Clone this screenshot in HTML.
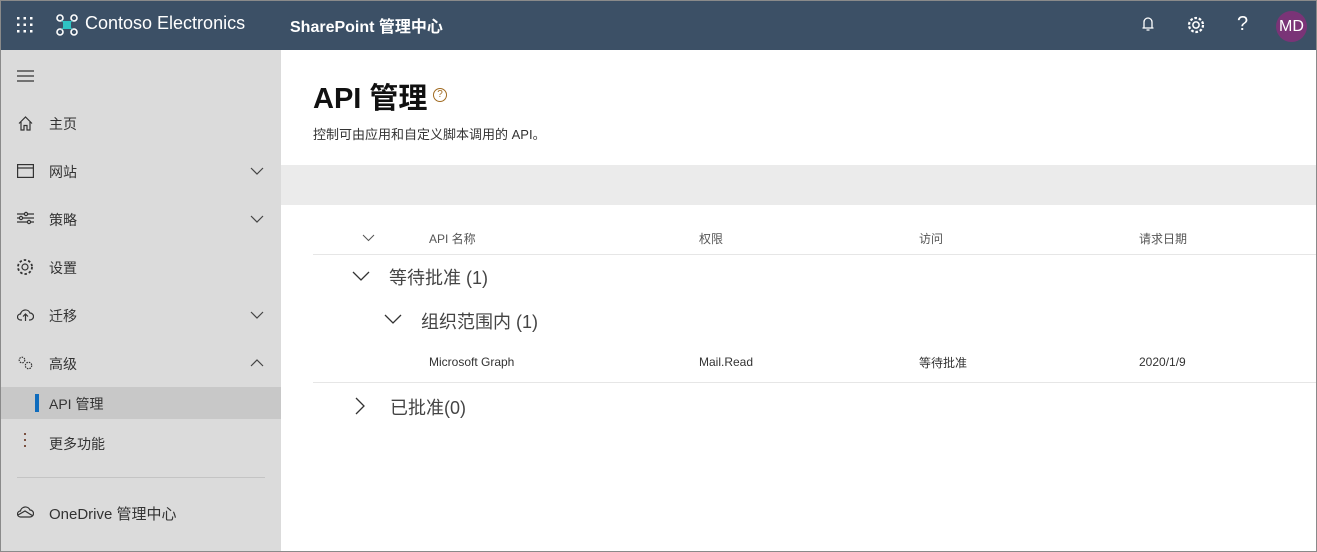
<!DOCTYPE html>
<html><head><meta charset="utf-8"><style>
*{margin:0;padding:0;box-sizing:border-box}
body{width:1317px;height:552px;overflow:hidden;font-family:"Liberation Sans","Noto Sans CJK SC",sans-serif;background:#fff;position:relative}
.frame{position:absolute;inset:0;border:1px solid #8a8a8a;pointer-events:none;z-index:10}
.top{position:absolute;left:0;top:0;width:1317px;height:50px;background:#3c5066;color:#fff}
.side{position:absolute;left:0;top:50px;width:281px;height:502px;background:#dbdbdb}
.abs{position:absolute}
.nav{position:absolute;left:49px;font-size:14px;color:#333}
.chev{position:absolute;left:250px}
.hdr{position:absolute;top:230px;font-size:12px;color:#555}
.cell{position:absolute;top:355px;font-size:12px;color:#333}
</style></head><body>
<div class="top">
 <svg class="abs" style="left:17px;top:17px" width="16" height="16"><g fill="#fff"><rect x="0" y="0" width="2.5" height="2.5"/><rect x="6.5" y="0" width="2.5" height="2.5"/><rect x="13" y="0" width="2.5" height="2.5"/><rect x="0" y="6.5" width="2.5" height="2.5"/><rect x="6.5" y="6.5" width="2.5" height="2.5"/><rect x="13" y="6.5" width="2.5" height="2.5"/><rect x="0" y="13" width="2.5" height="2.5"/><rect x="6.5" y="13" width="2.5" height="2.5"/><rect x="13" y="13" width="2.5" height="2.5"/></g></svg>
 <svg class="abs" style="left:56px;top:14px" width="22" height="22" viewBox="0 0 22 22"><g fill="none" stroke="#fff" stroke-width="1.6"><circle cx="4" cy="4" r="3"/><circle cx="18" cy="4" r="3"/><circle cx="4" cy="18" r="3"/><circle cx="18" cy="18" r="3"/></g><path d="M5 6 L11 9 L17 6 L13 11 L17 16 L11 13 L5 16 L9 11Z" fill="#2ec4c4"/><rect x="7" y="7" width="8" height="8" fill="#2ec4c4"/></svg>
 <div class="abs" style="left:85px;top:13px;font-size:18px">Contoso Electronics</div>
 <div class="abs" style="left:290px;top:13px;font-size:16px;font-weight:bold">SharePoint 管理中心</div>
 <svg class="abs" style="left:1141px;top:16px" width="14" height="16" viewBox="0 0 14 16"><path d="M3 12 V6 a4 4 0 0 1 8 0 V12 H1.5 H12.5 M5.5 14 h3" fill="none" stroke="#fff" stroke-width="1.3"/></svg>
 <svg class="abs" style="left:1186px;top:15px" width="20" height="20" viewBox="0 0 18 18"><circle cx="9" cy="9" r="2.8" fill="none" stroke="#fff" stroke-width="1.4"/><circle cx="9" cy="9" r="6.3" fill="none" stroke="#fff" stroke-width="2" stroke-dasharray="2.4 1.6"/></svg>
 <div class="abs" style="left:1237px;top:13px;font-size:20px">?</div>
 <div class="abs" style="left:1276px;top:11px;width:31px;height:31px;border-radius:50%;background:#7a3477;font-size:16px;line-height:31px;text-align:center">MD</div>
</div>
<div class="side">
 <svg class="abs" style="left:17px;top:20px" width="17" height="12"><g stroke="#333" stroke-width="1.2"><line x1="0" y1="1" x2="17" y2="1"/><line x1="0" y1="6" x2="17" y2="6"/><line x1="0" y1="11" x2="17" y2="11"/></g></svg>
 <svg class="abs" style="left:18px;top:66px" width="15" height="15" viewBox="0 0 15 15"><path d="M1 7.5 L7.5 1 L14 7.5 M3 6 V14 H6 V9.5 H9 V14 H12 V6" fill="none" stroke="#333" stroke-width="1.2"/></svg>
 <div class="nav" style="top:64px">主页</div>
 <svg class="abs" style="left:17px;top:114px" width="17" height="14"><rect x=".6" y=".6" width="15.8" height="12.8" fill="none" stroke="#333" stroke-width="1.2"/><line x1="0" y1="4" x2="17" y2="4" stroke="#333" stroke-width="1.2"/></svg>
 <div class="nav" style="top:112px">网站</div>
 <svg class="chev" style="top:117px" width="14" height="8"><path d="M1 1 L7 7 L13 1" fill="none" stroke="#444" stroke-width="1.2"/></svg>
 <svg class="abs" style="left:17px;top:161px" width="17" height="14"><g stroke="#333" stroke-width="1.2" fill="#dbdbdb"><line x1="0" y1="3" x2="17" y2="3"/><line x1="0" y1="7" x2="17" y2="7"/><line x1="0" y1="11" x2="17" y2="11"/><circle cx="9" cy="3" r="1.6"/><circle cx="4" cy="7" r="1.6"/><circle cx="12" cy="11" r="1.6"/></g></svg>
 <div class="nav" style="top:160px">策略</div>
 <svg class="chev" style="top:165px" width="14" height="8"><path d="M1 1 L7 7 L13 1" fill="none" stroke="#444" stroke-width="1.2"/></svg>
 <svg class="abs" style="left:16px;top:208px" width="18" height="18" viewBox="0 0 18 18"><circle cx="9" cy="9" r="3" fill="none" stroke="#333" stroke-width="1.2"/><circle cx="9" cy="9" r="7" fill="none" stroke="#333" stroke-width="1.8" stroke-dasharray="2.5 2"/></svg>
 <div class="nav" style="top:208px">设置</div>
 <svg class="abs" style="left:17px;top:258px" width="17" height="14" viewBox="0 0 17 14"><path d="M5 12 H3.5 a3 3 0 0 1 0-6 a5 5 0 0 1 9.5-1 a3.5 3.5 0 0 1 0 7 H12 M8.5 13 V6 M6 8.5 L8.5 6 L11 8.5" fill="none" stroke="#333" stroke-width="1.2"/></svg>
 <div class="nav" style="top:256px">迁移</div>
 <svg class="chev" style="top:261px" width="14" height="8"><path d="M1 1 L7 7 L13 1" fill="none" stroke="#444" stroke-width="1.2"/></svg>
 <svg class="abs" style="left:17px;top:305px" width="17" height="16"><circle cx="5" cy="5" r="2.8" fill="none" stroke="#333" stroke-width="1.2" stroke-dasharray="1.5 1"/><circle cx="11.5" cy="10.5" r="3.2" fill="none" stroke="#333" stroke-width="1.2" stroke-dasharray="1.5 1"/></svg>
 <div class="nav" style="top:304px">高级</div>
 <svg class="chev" style="top:309px" width="14" height="8"><path d="M1 7 L7 1 L13 7" fill="none" stroke="#444" stroke-width="1.2"/></svg>
 <div class="abs" style="left:0;top:337px;width:281px;height:32px;background:#c8c8c8"></div>
 <div class="abs" style="left:35px;top:344px;width:4px;height:18px;background:#0f6cbd"></div>
 <div class="nav" style="top:344px">API 管理</div>
 <div class="abs" style="left:24px;top:383px;width:2px;height:2px;background:#7a5040;box-shadow:0 6px 0 #7a5040,0 12px 0 #7a5040"></div>
 <div class="nav" style="top:384px">更多功能</div>
 <div class="abs" style="left:17px;top:427px;width:248px;height:1px;background:#c4c4c4"></div>
 <svg class="abs" style="left:17px;top:455px" width="17" height="13" viewBox="0 0 17 13"><path d="M3.5 12 a3 3 0 0 1 0-6 a5 5 0 0 1 9.5-1 a3.5 3.5 0 0 1 0 7 Z M1 10 L8 6 L16 11" fill="none" stroke="#333" stroke-width="1.2"/></svg>
 <div class="nav" style="top:453px;font-size:15px">OneDrive 管理中心</div>
</div>
<div class="abs" style="left:313px;top:75px;font-size:29px;font-weight:bold;color:#111">API 管理</div>
<div class="abs" style="left:433px;top:88px;width:14px;height:14px;border:1px solid #a06a20;border-radius:50%;font-size:10px;line-height:12px;text-align:center;color:#a06a20">?</div>
<div class="abs" style="left:313px;top:124px;font-size:13px;color:#333">控制可由应用和自定义脚本调用的 API。</div>
<div class="abs" style="left:281px;top:165px;width:1036px;height:40px;background:#ebebeb"></div>
<svg class="abs" style="left:362px;top:234px" width="13" height="8"><path d="M1 1 L6.5 6.5 L12 1" fill="none" stroke="#555" stroke-width="1"/></svg>
<div class="hdr" style="left:429px">API 名称</div>
<div class="hdr" style="left:699px">权限</div>
<div class="hdr" style="left:919px">访问</div>
<div class="hdr" style="left:1139px">请求日期</div>
<div class="abs" style="left:313px;top:254px;width:1004px;height:1px;background:#e6e6e6"></div>
<svg class="abs" style="left:352px;top:271px" width="18" height="11"><path d="M1 1 L9 9 L17 1" fill="none" stroke="#333" stroke-width="1.3"/></svg>
<div class="abs" style="left:389px;top:264px;font-size:18px;color:#444">等待批准 (1)</div>
<svg class="abs" style="left:384px;top:314px" width="18" height="11"><path d="M1 1 L9 9 L17 1" fill="none" stroke="#333" stroke-width="1.3"/></svg>
<div class="abs" style="left:421px;top:308px;font-size:18px;color:#444">组织范围内 (1)</div>
<div class="cell" style="left:429px">Microsoft Graph</div>
<div class="cell" style="left:699px">Mail.Read</div>
<div class="cell" style="left:919px;top:354px">等待批准</div>
<div class="cell" style="left:1139px">2020/1/9</div>
<div class="abs" style="left:313px;top:382px;width:1004px;height:1px;background:#e6e6e6"></div>
<svg class="abs" style="left:355px;top:397px" width="11" height="18"><path d="M1 1 L9 9 L1 17" fill="none" stroke="#333" stroke-width="1.3"/></svg>
<div class="abs" style="left:390px;top:394px;font-size:18px;color:#444">已批准(0)</div>
<div class="frame"></div>
</body></html>
